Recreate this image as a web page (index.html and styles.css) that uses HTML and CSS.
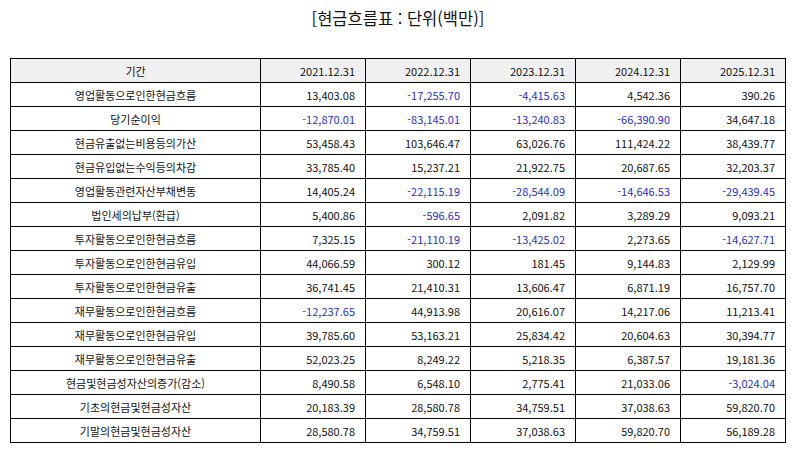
FILE: index.html
```html
<!DOCTYPE html>
<html lang="ko">
<head>
<meta charset="utf-8">
<link rel="stylesheet" href="styles.css">
</head>
<body>
<h1 class="title">[현금흐름표 : 단위(백만)]</h1>
<table class="cf">
<thead>
<tr><th class="label">기간</th><th>2021.12.31</th><th>2022.12.31</th><th>2023.12.31</th><th>2024.12.31</th><th>2025.12.31</th></tr>
</thead>
<tbody>
<tr><td class="label">영업활동으로인한현금흐름</td><td>13,403.08</td><td class="neg">-17,255.70</td><td class="neg">-4,415.63</td><td>4,542.36</td><td>390.26</td></tr>
<tr><td class="label">당기순이익</td><td class="neg">-12,870.01</td><td class="neg">-83,145.01</td><td class="neg">-13,240.83</td><td class="neg">-66,390.90</td><td>34,647.18</td></tr>
<tr><td class="label">현금유출없는비용등의가산</td><td>53,458.43</td><td>103,646.47</td><td>63,026.76</td><td>111,424.22</td><td>38,439.77</td></tr>
<tr><td class="label">현금유입없는수익등의차감</td><td>33,785.40</td><td>15,237.21</td><td>21,922.75</td><td>20,687.65</td><td>32,203.37</td></tr>
<tr><td class="label">영업활동관련자산부채변동</td><td>14,405.24</td><td class="neg">-22,115.19</td><td class="neg">-28,544.09</td><td class="neg">-14,646.53</td><td class="neg">-29,439.45</td></tr>
<tr><td class="label">법인세의납부(환급)</td><td>5,400.86</td><td class="neg">-596.65</td><td>2,091.82</td><td>3,289.29</td><td>9,093.21</td></tr>
<tr><td class="label">투자활동으로인한현금흐름</td><td>7,325.15</td><td class="neg">-21,110.19</td><td class="neg">-13,425.02</td><td>2,273.65</td><td class="neg">-14,627.71</td></tr>
<tr><td class="label">투자활동으로인한현금유입</td><td>44,066.59</td><td>300.12</td><td>181.45</td><td>9,144.83</td><td>2,129.99</td></tr>
<tr><td class="label">투자활동으로인한현금유출</td><td>36,741.45</td><td>21,410.31</td><td>13,606.47</td><td>6,871.19</td><td>16,757.70</td></tr>
<tr><td class="label">재무활동으로인한현금흐름</td><td class="neg">-12,237.65</td><td>44,913.98</td><td>20,616.07</td><td>14,217.06</td><td>11,213.41</td></tr>
<tr><td class="label">재무활동으로인한현금유입</td><td>39,785.60</td><td>53,163.21</td><td>25,834.42</td><td>20,604.63</td><td>30,394.77</td></tr>
<tr><td class="label">재무활동으로인한현금유출</td><td>52,023.25</td><td>8,249.22</td><td>5,218.35</td><td>6,387.57</td><td>19,181.36</td></tr>
<tr><td class="label">현금및현금성자산의증가(감소)</td><td>8,490.58</td><td>6,548.10</td><td>2,775.41</td><td>21,033.06</td><td class="neg">-3,024.04</td></tr>
<tr><td class="label">기초의현금및현금성자산</td><td>20,183.39</td><td>28,580.78</td><td>34,759.51</td><td>37,038.63</td><td>59,820.70</td></tr>
<tr><td class="label">기말의현금및현금성자산</td><td>28,580.78</td><td>34,759.51</td><td>37,038.63</td><td>59,820.70</td><td>56,189.28</td></tr>
</tbody>
</table>
</body>
</html>
```

FILE: styles.css
```css
html, body {
  margin: 0;
  padding: 0;
  background: #ffffff;
}
body {
  padding: 0 8px 0 10px;
  font-family: "Noto Sans CJK KR", "Noto Sans", sans-serif;
  color: #111111;
}
.title {
  margin: 0;
  padding-top: 6px;
  height: 58px;
  box-sizing: border-box;
  text-align: center;
  font-size: 16.5px;
  font-weight: normal;
  line-height: 24px;
  color: #111111;
}
.cf {
  border-collapse: collapse;
  width: 776px;
  table-layout: fixed;
  font-size: 11px;
}
.cf th, .cf td {
  border: 1px solid #000000;
  height: 23px;
  padding: 0 10px;
  text-align: right;
  font-weight: normal;
  line-height: 14px;
  white-space: nowrap;
}
.cf th {
  background: #f0f0f0;
}
.cf .label {
  width: 250px;
  text-align: center;
  box-sizing: border-box;
}
.cf .neg {
  color: #2a2ad6;
}
```
